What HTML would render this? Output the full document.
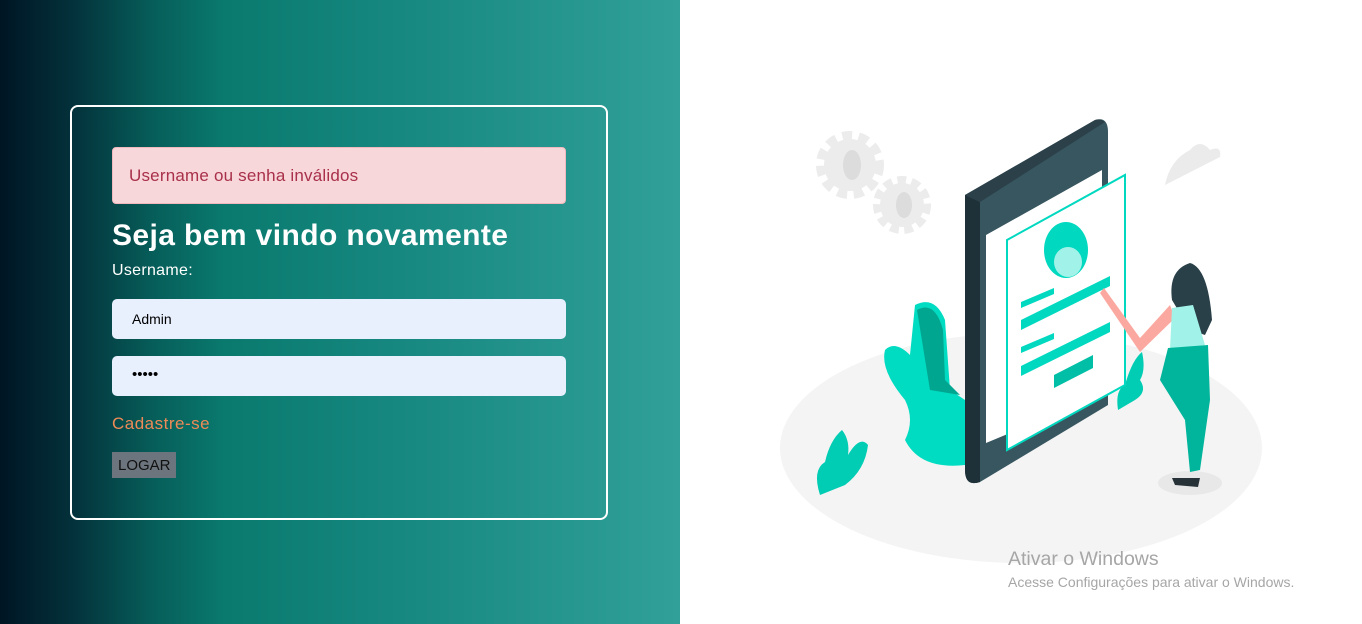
<!DOCTYPE html>
<html><head><meta charset="utf-8"><style>
*{margin:0;padding:0;box-sizing:border-box}
body{width:1362px;height:624px;overflow:hidden;background:#fff;font-family:"Liberation Sans",sans-serif;position:relative}
.left{position:absolute;left:0;top:0;width:680px;height:624px;background:linear-gradient(90deg,#001524 0px,#03303a 70px,#065c58 150px,#0a7a6e 225px,#178880 400px,#30a098 680px)}
.box{position:absolute;left:70px;top:105px;width:538px;height:415px;border:2px solid #fff;border-radius:8px}
.alert{position:absolute;left:112px;top:147px;width:454px;height:57px;background:#f8d7da;border:1px solid #f1b8bd;border-radius:4px;color:#a8304a;font-size:17px;padding:18px 0 0 16px;letter-spacing:0.2px}
h1{position:absolute;left:112px;top:219px;color:#fff;font-size:30px;font-weight:bold;letter-spacing:0.4px}
.lbl{position:absolute;left:112px;top:262px;color:#fff;font-size:16px;letter-spacing:0.3px}
.in{position:absolute;left:112px;width:454px;height:40px;background:#e8f0fe;border-radius:5px;font-size:14px;color:#000;padding:12px 0 0 20px}
.cad{position:absolute;left:112px;top:414px;color:#ee8a57;font-size:17px;letter-spacing:0.5px}
.btn{position:absolute;left:112px;top:452px;width:64px;height:26px;background:#6c757d;color:#111;font-size:15px;padding:5px 0 0 6px}
.w1{position:absolute;left:1008px;top:548px;color:#a6a6a6;font-size:19.5px}
.w2{position:absolute;left:1008px;top:574px;color:#a6a6a6;font-size:14px}
</style></head><body>
<div class="left"></div>
<div class="box"></div>
<div class="alert">Username ou senha inválidos</div>
<h1>Seja bem vindo novamente</h1>
<div class="lbl">Username:</div>
<div class="in" style="top:299px">Admin</div>
<div class="in" style="top:356px;padding-top:10px;font-size:15px">•••••</div>
<div class="cad">Cadastre-se</div>
<div class="btn">LOGAR</div>
<svg style="position:absolute;left:0;top:0" width="1362" height="624">
<ellipse cx="1021" cy="448" rx="241" ry="115" fill="#f4f4f4"/>
<g fill="none" stroke="#ececec"><circle cx="850" cy="165" r="27" stroke-width="14" stroke-dasharray="9 6"/><circle cx="902" cy="205" r="23" stroke-width="12" stroke-dasharray="8 5"/></g>
<g fill="#ececec"><circle cx="850" cy="165" r="26"/><circle cx="902" cy="205" r="22"/></g>
<g fill="#dcdcdc"><ellipse cx="852" cy="165" rx="9" ry="15"/><ellipse cx="904" cy="205" rx="8" ry="13"/></g>
<path d="M1165,185 Q1170,160 1190,150 Q1200,138 1210,150 Q1222,145 1220,157 Z" fill="#ebebeb"/>
<ellipse cx="1190" cy="483" rx="32" ry="12" fill="#e8e8e8"/>
<path d="M915,305 Q935,295 945,320 L950,390 L965,400 L965,465 Q920,470 905,440 Q915,420 905,400 Q880,370 885,350 Q895,340 910,355 Z" fill="#00dcc2"/>
<path d="M917,310 Q935,300 943,330 L945,380 L960,395 L930,390 Z" fill="#00a68f"/>
<path d="M820,495 Q812,470 825,462 Q830,440 842,430 Q850,440 848,455 Q860,435 868,445 Q865,470 845,485 Z" fill="#00cdb3"/>
<path d="M1118,410 Q1115,390 1125,385 Q1132,360 1142,352 Q1146,370 1140,380 Q1148,392 1135,400 Z" fill="#00cdb3"/>
<path d="M965,195 L1095,120 Q1108,116 1108,132 L1108,405 L980,482 Q965,487 965,470 Z" fill="#37565f"/>
<path d="M965,195 L980,202 L980,482 Q965,487 965,470 Z" fill="#1e3038"/>
<path d="M965,195 L1095,120 Q1100,118 1105,122 L980,202 Z" fill="#2b4049"/>
<path d="M986,235 L1102,170 L1102,395 L986,443 Z" fill="#fff"/>
<path d="M1007,240 L1125,175 L1125,385 L1007,450 Z" fill="#fff" stroke="#00d9c0" stroke-width="2"/>
<ellipse cx="1066" cy="250" rx="22" ry="28" fill="#00d9c0"/>
<ellipse cx="1068" cy="262" rx="14" ry="15" fill="#a1f2e8"/>
<g fill="#00d9c0"><path d="M1021,320 L1110,276 L1110,286 L1021,330 Z"/><path d="M1021,366 L1110,322 L1110,332 L1021,376 Z"/><path d="M1021,302 L1054,288 L1054,294 L1021,308 Z"/><path d="M1021,347 L1054,333 L1054,339 L1021,353 Z"/><path d="M1054,375 L1093,355 L1093,368 L1054,388 Z" fill="#00bfa6"/></g>
<path d="M1104,288 L1140,338 L1170,305 L1175,318 L1140,352 L1100,293 Z" fill="#fba9a0"/>
<path d="M1172,300 Q1168,270 1190,263 Q1208,268 1212,320 L1205,335 L1190,330 Z" fill="#2a4048"/>
<path d="M1172,308 L1193,305 L1205,345 L1170,350 Z" fill="#a1f2e8"/>
<path d="M1168,348 L1208,345 L1210,400 L1200,470 L1190,472 L1185,420 L1160,380 Z" fill="#00b59b"/>
<path d="M1172,478 L1200,478 L1198,487 L1175,485 Z" fill="#263238"/>
</svg>
<div class="w1">Ativar o Windows</div>
<div class="w2">Acesse Configurações para ativar o Windows.</div>
</body></html>
